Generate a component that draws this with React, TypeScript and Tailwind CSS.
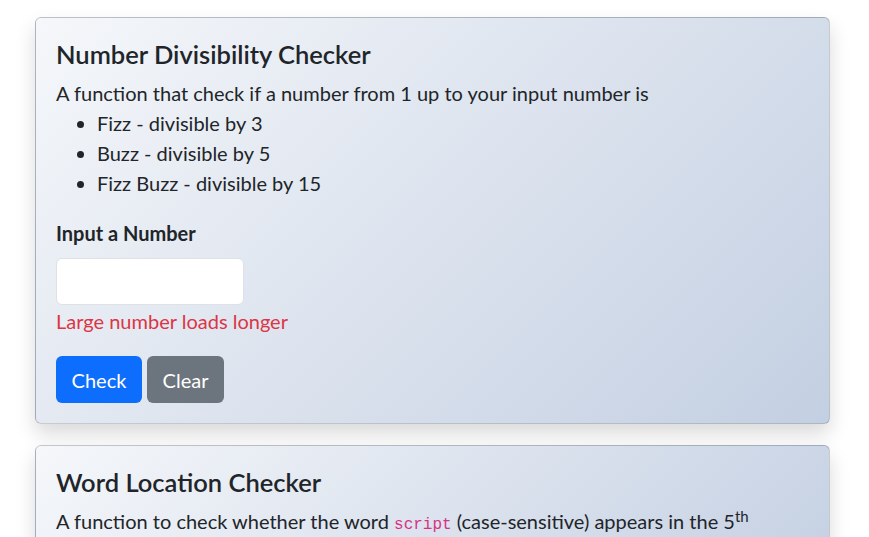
import React, { useState } from 'react';

const cardClass =
  'rounded-[6px] border border-[rgba(0,0,0,0.175)] bg-[linear-gradient(135deg,#f5f7fa_0%,#c3cfe2_100%)] shadow-[0_10px_20px_rgba(0,0,0,0.15)] px-5 pt-[18px] pb-5';

export default function App() {
  const [value, setValue] = useState('');

  return (
    <div className="min-h-[537px] bg-white pt-[17px] font-['Lato',sans-serif] text-[20px] leading-[30px] text-[#212529]">
      <div className="ml-[35px] w-[795px] flex flex-col gap-[21px] pb-5">
        {/* Fizz buzz */}
        <div className={cardClass}>
          <h4 className="text-[25.5px] leading-[36px] font-semibold mb-[6px]">Number Divisibility Checker</h4>
          <p className="mt-[1px]">A function that check if a number from 1 up to your input number is</p>
          <ul className="list-disc pl-[41px] mb-5">
            <li>Fizz - divisible by 3</li>
            <li>Buzz - divisible by 5</li>
            <li>Fizz Buzz - divisible by 15</li>
          </ul>
          <label className="block font-bold mb-[10px]">Input a Number</label>
          <input
            type="text"
            value={value}
            onChange={(e) => setValue(e.target.value)}
            className="block w-[188px] h-[47px] rounded-[6px] border border-[#dee2e6] bg-white px-[15px] outline-none"
          />
          <div className="text-[#dc3545] mt-[1px]">Large number loads longer</div>
          <div className="flex gap-[5px] mt-5">
            <button className="h-[47px] w-[86px] rounded-[6px] bg-[#0d6efd] text-white">Check</button>
            <button
              onClick={() => setValue('')}
              className="h-[47px] w-[77px] rounded-[6px] bg-[#6c757d] text-white"
            >
              Clear
            </button>
          </div>
        </div>

        {/* Word location */}
        <div className={cardClass + ' pb-[60px]'}>
          <h4 className="text-[25.5px] leading-[36px] font-semibold mb-[6px]">Word Location Checker</h4>
          <p className="mt-[1px]">
            A function to check whether the word{' '}
            <code className="font-['Liberation_Mono',monospace] text-[16px] text-[#d63384]">script</code>{' '}
            (case-sensitive) appears in the 5<sup className="text-[15px]">th</sup>
          </p>
        </div>
      </div>
    </div>
  );
}
